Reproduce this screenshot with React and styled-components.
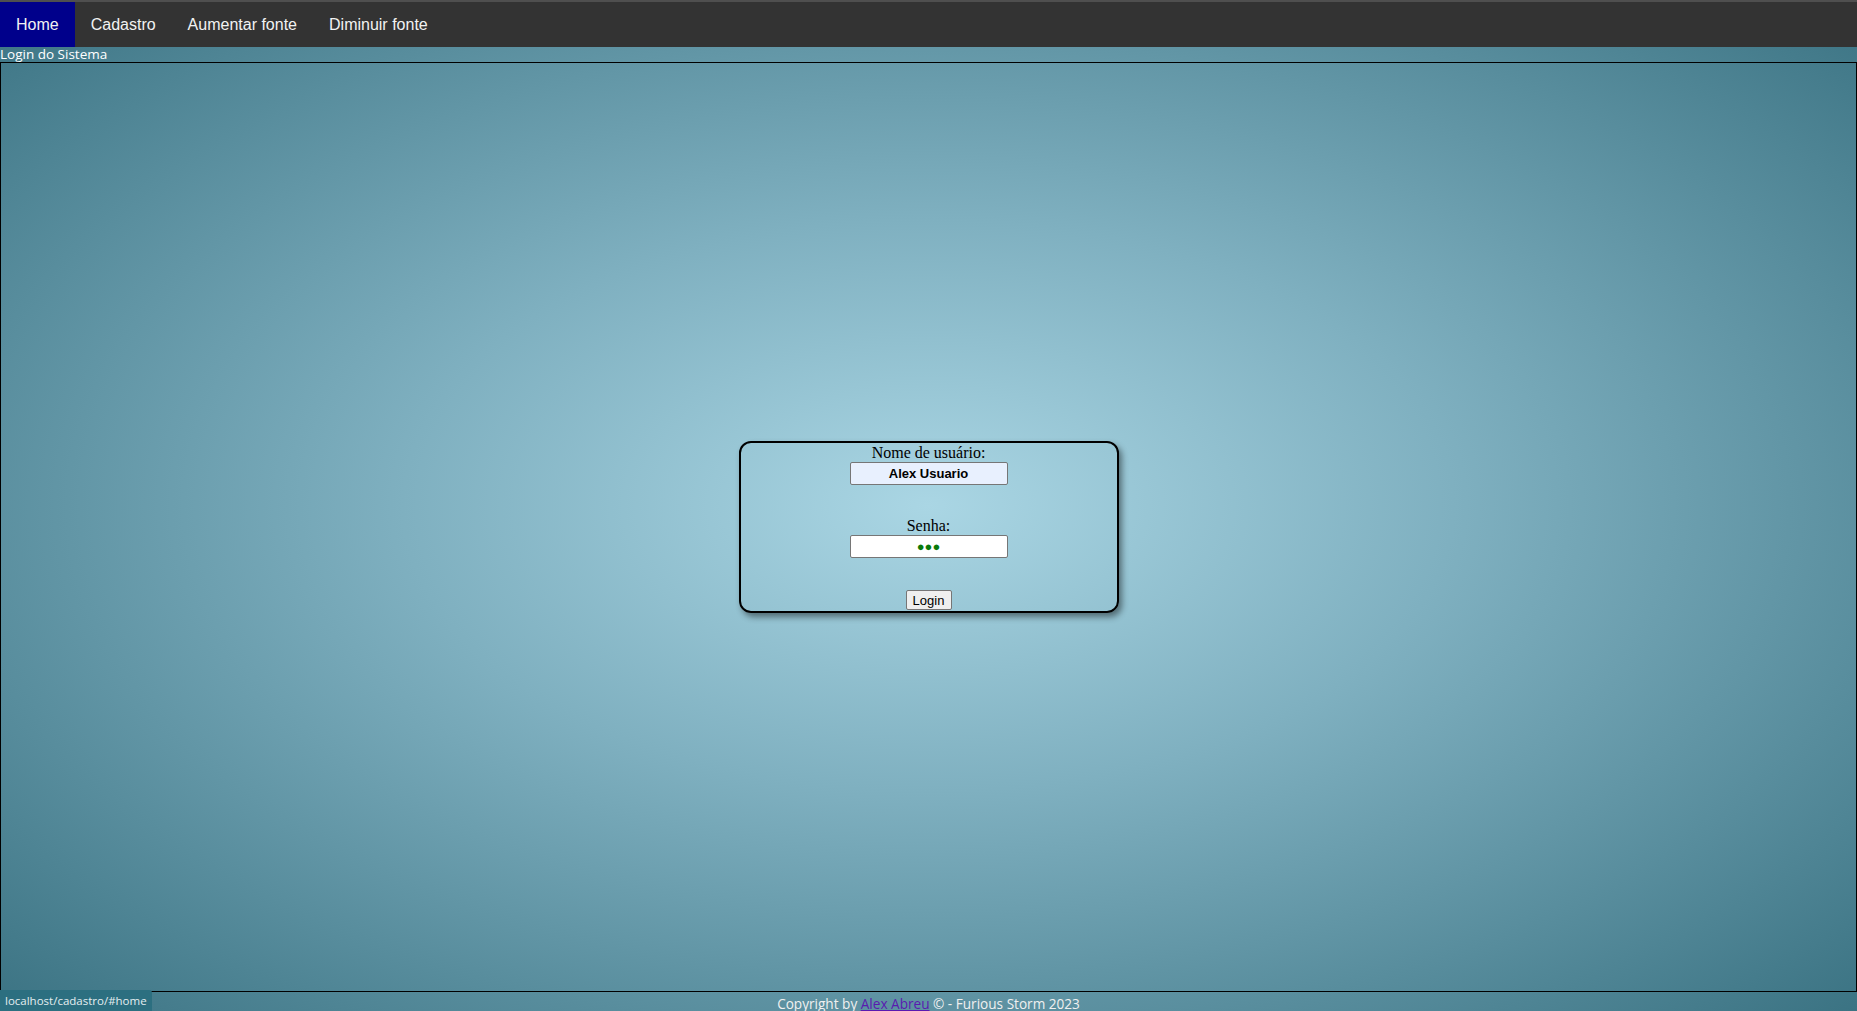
import React from "react";
import styled, { createGlobalStyle } from "styled-components";

const GlobalStyle = createGlobalStyle`
  html, body {
    margin: 0;
    height: 100%;
  }
  body {
    overflow: hidden;
    background: radial-gradient(ellipse at 50% 50%, #aad6e4 0%, #7fb0c0 40%, #3b7383 100%);
    font-family: "Liberation Serif", "Times New Roman", serif;
  }
`;

const Page = styled.div`
  display: flex;
  flex-direction: column;
  & > * {
    flex-shrink: 0;
  }
`;

const TopNav = styled.nav`
  display: flex;
  height: 45px;
  background: #333333;
  border-top: 2px solid #4f4f4f;
`;

const NavLink = styled.a`
  display: flex;
  align-items: center;
  padding: 0 16px;
  font-family: "Liberation Sans", Arial, sans-serif;
  font-size: 16px;
  color: #f2f2f2;
  text-decoration: none;
  background: ${(p) => (p.$active ? "#00008b" : "transparent")};
`;

const Caption = styled.div`
  height: 15px;
  line-height: 15px;
  font-family: "Open Sans", "Noto Sans", sans-serif;
  font-size: 13.5px;
  color: #ffffff;
  white-space: nowrap;
`;

const Main = styled.main`
  box-sizing: border-box;
  height: 930px;
  border: 1px solid #000;
  display: flex;
  align-items: center;
  justify-content: center;
`;

const LoginCard = styled.form`
  box-sizing: border-box;
  width: 380px;
  height: 172px;
  padding-top: 1px;
  border: 2px solid #000;
  border-radius: 12px;
  box-shadow: 3px 4px 6px rgba(0, 0, 0, 0.45);
  display: flex;
  flex-direction: column;
  align-items: center;
  font-size: 16px;
  color: #000;
`;

const Label = styled.label`
  line-height: 18px;
  margin-top: ${(p) => p.$top || 0}px;
`;

const Field = styled.input`
  box-sizing: border-box;
  width: 158px;
  height: 23px;
  border: 1px solid #767676;
  border-radius: 2px;
  background: ${(p) => p.$bg || "#fff"};
  text-align: center;
  font-family: "Liberation Sans", Arial, sans-serif;
  font-size: 13px;
  font-weight: 700;
  color: ${(p) => p.$color || "#000"};
  padding: 0 4px;
  outline: none;
`;

const SubmitButton = styled.button`
  box-sizing: border-box;
  margin-top: 32px;
  width: 46px;
  height: 20px;
  padding: 0;
  border: 1px solid #767676;
  border-radius: 2px;
  background: #efefef;
  font-family: "Liberation Sans", Arial, sans-serif;
  font-size: 13px;
  color: #000;
`;

const Footer = styled.footer`
  text-align: center;
  margin-top: 2px;
  font-family: "Open Sans", "Noto Sans", sans-serif;
  font-size: 13.6px;
  line-height: 19px;
  color: #f0f0f0;

  a {
    color: #5a1ab0;
  }
`;

const StatusBubble = styled.div`
  position: fixed;
  left: 0;
  bottom: 0;
  height: 21px;
  padding: 0 5px;
  display: flex;
  align-items: center;
  background: #2c6f80;
  border-top-right-radius: 3px;
  font-family: "Open Sans", "Noto Sans", sans-serif;
  font-size: 11.5px;
  color: #e4eef0;
`;

export default function App() {
  return (
    <>
      <GlobalStyle />
      <Page>
        <TopNav>
          <NavLink href="#home" $active>Home</NavLink>
          <NavLink href="#cadastro">Cadastro</NavLink>
          <NavLink href="#mais">Aumentar fonte</NavLink>
          <NavLink href="#menos">Diminuir fonte</NavLink>
        </TopNav>
        <Caption>Login do Sistema</Caption>
        <Main>
          <LoginCard onSubmit={(e) => e.preventDefault()}>
            <Label htmlFor="usuario">Nome de usuário:</Label>
            <Field id="usuario" defaultValue="Alex Usuario" $bg="#e8f0fe" />
            <Label htmlFor="senha" $top={32}>Senha:</Label>
            <Field id="senha" defaultValue="●●●" $color="#0a7a0a" />
            <SubmitButton type="submit">Login</SubmitButton>
          </LoginCard>
        </Main>
        <Footer>
          Copyright by <a href="#autor">Alex Abreu</a> © - Furious Storm 2023
        </Footer>
      </Page>
      <StatusBubble>localhost/cadastro/#home</StatusBubble>
    </>
  );
}
